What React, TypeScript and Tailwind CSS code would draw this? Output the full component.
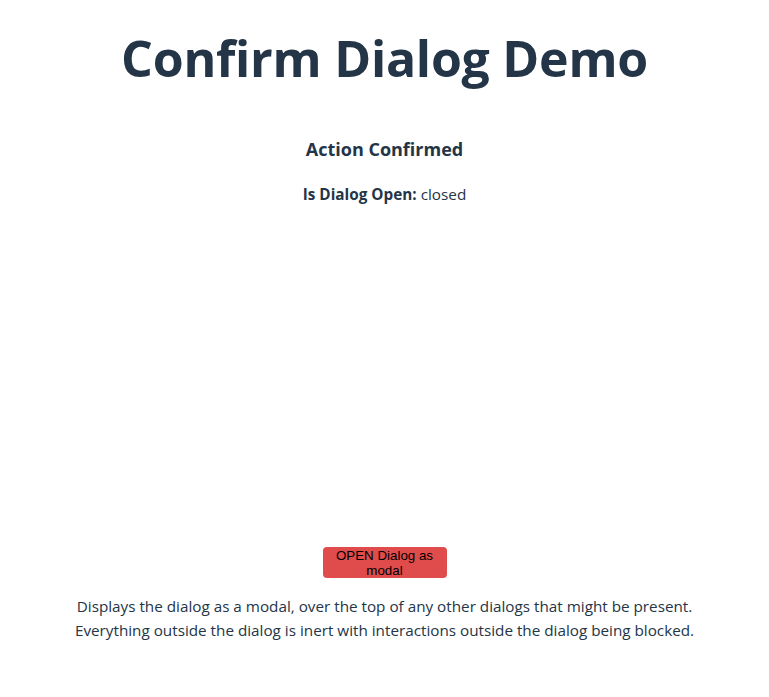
const App = () => {
  return (
    <main
      className="min-h-screen bg-white text-[#233547]"
      style={{ fontFamily: '"Open Sans", "Noto Sans", sans-serif' }}
    >
      <div className="flex flex-col items-center pt-[24px]">
        <h1 className="text-[50px] font-bold leading-[68px] tracking-[-0.25px]">
          Confirm Dialog Demo
        </h1>

        <h2 className="mt-[45px] text-lg font-bold leading-6">Action Confirmed</h2>

        <p className="mt-[21px] text-[15.3px] leading-6">
          <span className="font-bold">Is Dialog Open:</span> closed
        </p>

        <div className="h-[341px]" />

        <button
          type="button"
          className="h-[31px] w-[124px] rounded-[4px] bg-[#e04b4b] px-2 text-[13.33px] leading-[15px] text-black"
          style={{ fontFamily: '"Liberation Sans", Arial, sans-serif' }}
        >
          OPEN Dialog as modal
        </button>

        <p className="mt-[16px] text-center text-[15.25px] leading-6">
          Displays the dialog as a modal, over the top of any other dialogs that might be present.
          <br />
          Everything outside the dialog is inert with interactions outside the dialog being blocked.
        </p>
      </div>
    </main>
  );
};

export default App;
